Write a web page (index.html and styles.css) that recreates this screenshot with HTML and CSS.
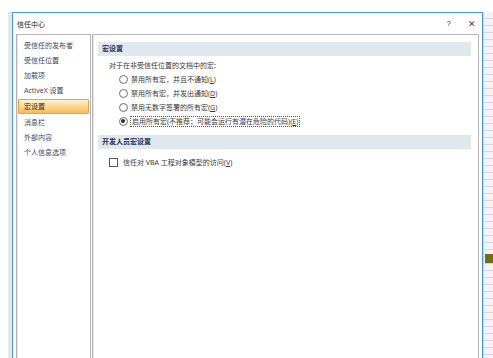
FILE: index.html
```html
<!DOCTYPE html>
<html lang="zh">
<head>
  <meta charset="UTF-8">
  <title>信任中心</title>
  <link rel="stylesheet" href="styles.css">
</head>
<body>
  <div class="desk">
    <div class="edge"></div>
    <div class="dialog">
      <div class="titlebar">
        <span class="title">信任中心</span>
        <span class="help">?</span>
        <span class="close">✕</span>
      </div>
      <div class="panes">
        <ul class="nav">
          <li>受信任的发布者</li>
          <li>受信任位置</li>
          <li>加载项</li>
          <li>ActiveX 设置</li>
          <li class="active">宏设置</li>
          <li>消息栏</li>
          <li>外部内容</li>
          <li>个人信息选项</li>
        </ul>
        <div class="content">
          <div class="section-head">宏设置</div>
          <p class="intro">对于在非受信任位置的文档中的宏:</p>
          <div class="options">
            <label class="option"><span class="radio"></span><span>禁用所有宏，并且不通知(<u>L</u>)</span></label>
            <label class="option"><span class="radio"></span><span>禁用所有宏，并发出通知(<u>D</u>)</span></label>
            <label class="option"><span class="radio"></span><span>禁用无数字签署的所有宏(<u>G</u>)</span></label>
            <label class="option"><span class="radio checked"></span><span class="focus">启用所有宏(不推荐；可能会运行有潜在危险的代码)(<u>E</u>)</span></label>
          </div>
          <div class="section-head second">开发人员宏设置</div>
          <label class="check-row"><span class="checkbox"></span><span>信任对 VBA 工程对象模型的访问(<u>V</u>)</span></label>
        </div>
      </div>
    </div>
    <div class="sheet">
      <div class="cell-mark"></div>
    </div>
  </div>
</body>
</html>
```

FILE: styles.css
```css
body {
  margin: 0;
  background: #fff;
  font-family: "Noto Sans", "Noto Sans CJK SC", sans-serif;
  font-size: 7px;
  color: #3a3a3a;
  overflow: hidden;
}

.desk {
  display: flex;
  height: 346px;
  margin-top: 12px;
  padding-left: 8px;
}

.edge {
  width: 4px;
  background: #e6e6e6;
}

.dialog {
  width: 471px;
  border: 1px solid #4a95d8;
  border-bottom: none;
  background: #fff;
  display: flex;
  flex-direction: column;
}

.titlebar {
  height: 21px;
  display: flex;
  align-items: center;
  padding: 0 6px 0 4px;
  flex-shrink: 0;
}

.title {
  flex: 1;
  color: #222;
}

.help {
  font-family: "Liberation Sans", sans-serif;
  font-size: 8px;
  color: #333;
  margin-right: 17px;
}

.close {
  font-size: 9px;
  color: #444;
}

.panes {
  flex: 1;
  display: flex;
  gap: 1px;
  padding: 0 3px 0 3px;
}

.nav {
  list-style: none;
  margin: 0;
  padding: 3px 1px 0 1px;
  width: 71px;
  border: 1px solid #b5b5b5;
  border-bottom: none;
  box-shadow: inset 1px 0 0 #e2e2e2;
}

.nav li {
  height: 15px;
  line-height: 15px;
  padding-left: 6px;
  color: #3b4a66;
}

.nav li.active {
  height: 13px;
  line-height: 13px;
  margin: 1px 0;
  padding-left: 5px;
  border: 1px solid #e3a54c;
  border-radius: 1px;
  background: linear-gradient(#fff3cf, #fdd38a 55%, #f9b95c);
  color: #333;
}

.content {
  flex: 1;
  border: 1px solid #b5b5b5;
  border-bottom: none;
  box-shadow: inset 1px 0 0 #e2e2e2;
  padding: 7px 7px 0 5px;
}

.section-head {
  height: 14px;
  line-height: 14px;
  background: #dfe7ef;
  padding-left: 4px;
  font-weight: bold;
  color: #1b3152;
}

.section-head.second {
  margin-top: 7px;
}

.intro {
  margin: 5px 0 0 11px;
  line-height: 10px;
}

.options {
  display: flex;
  flex-direction: column;
  padding-left: 21px;
  margin-top: 1px;
}

.option {
  display: flex;
  align-items: center;
  height: 14px;
  gap: 3px;
}

.radio {
  width: 7px;
  height: 7px;
  border: 1px solid #6e6e6e;
  border-radius: 50%;
  background: #fff;
  display: flex;
  align-items: center;
  justify-content: center;
}

.radio.checked::after {
  content: "";
  width: 4px;
  height: 4px;
  border-radius: 50%;
  background: #2b2b2b;
}

.focus {
  outline: 1px dotted #555;
  padding: 0 1px;
  line-height: 9px;
}

.check-row {
  display: flex;
  align-items: center;
  gap: 5px;
  margin: 8px 0 0 11px;
  height: 10px;
}

.checkbox {
  width: 7px;
  height: 7px;
  border: 1px solid #5a5a5a;
  background: #fff;
}

u {
  text-decoration: underline;
}

.sheet {
  width: 9px;
  background: repeating-linear-gradient(#f1f3f6 0 6px, #d3d8df 6px 7px);
  border-left: 1px solid #c9d6e6;
  position: relative;
}

.cell-mark {
  position: absolute;
  left: 1px;
  right: 0;
  top: 242px;
  height: 9px;
  background: #6f6f1e;
}
```
